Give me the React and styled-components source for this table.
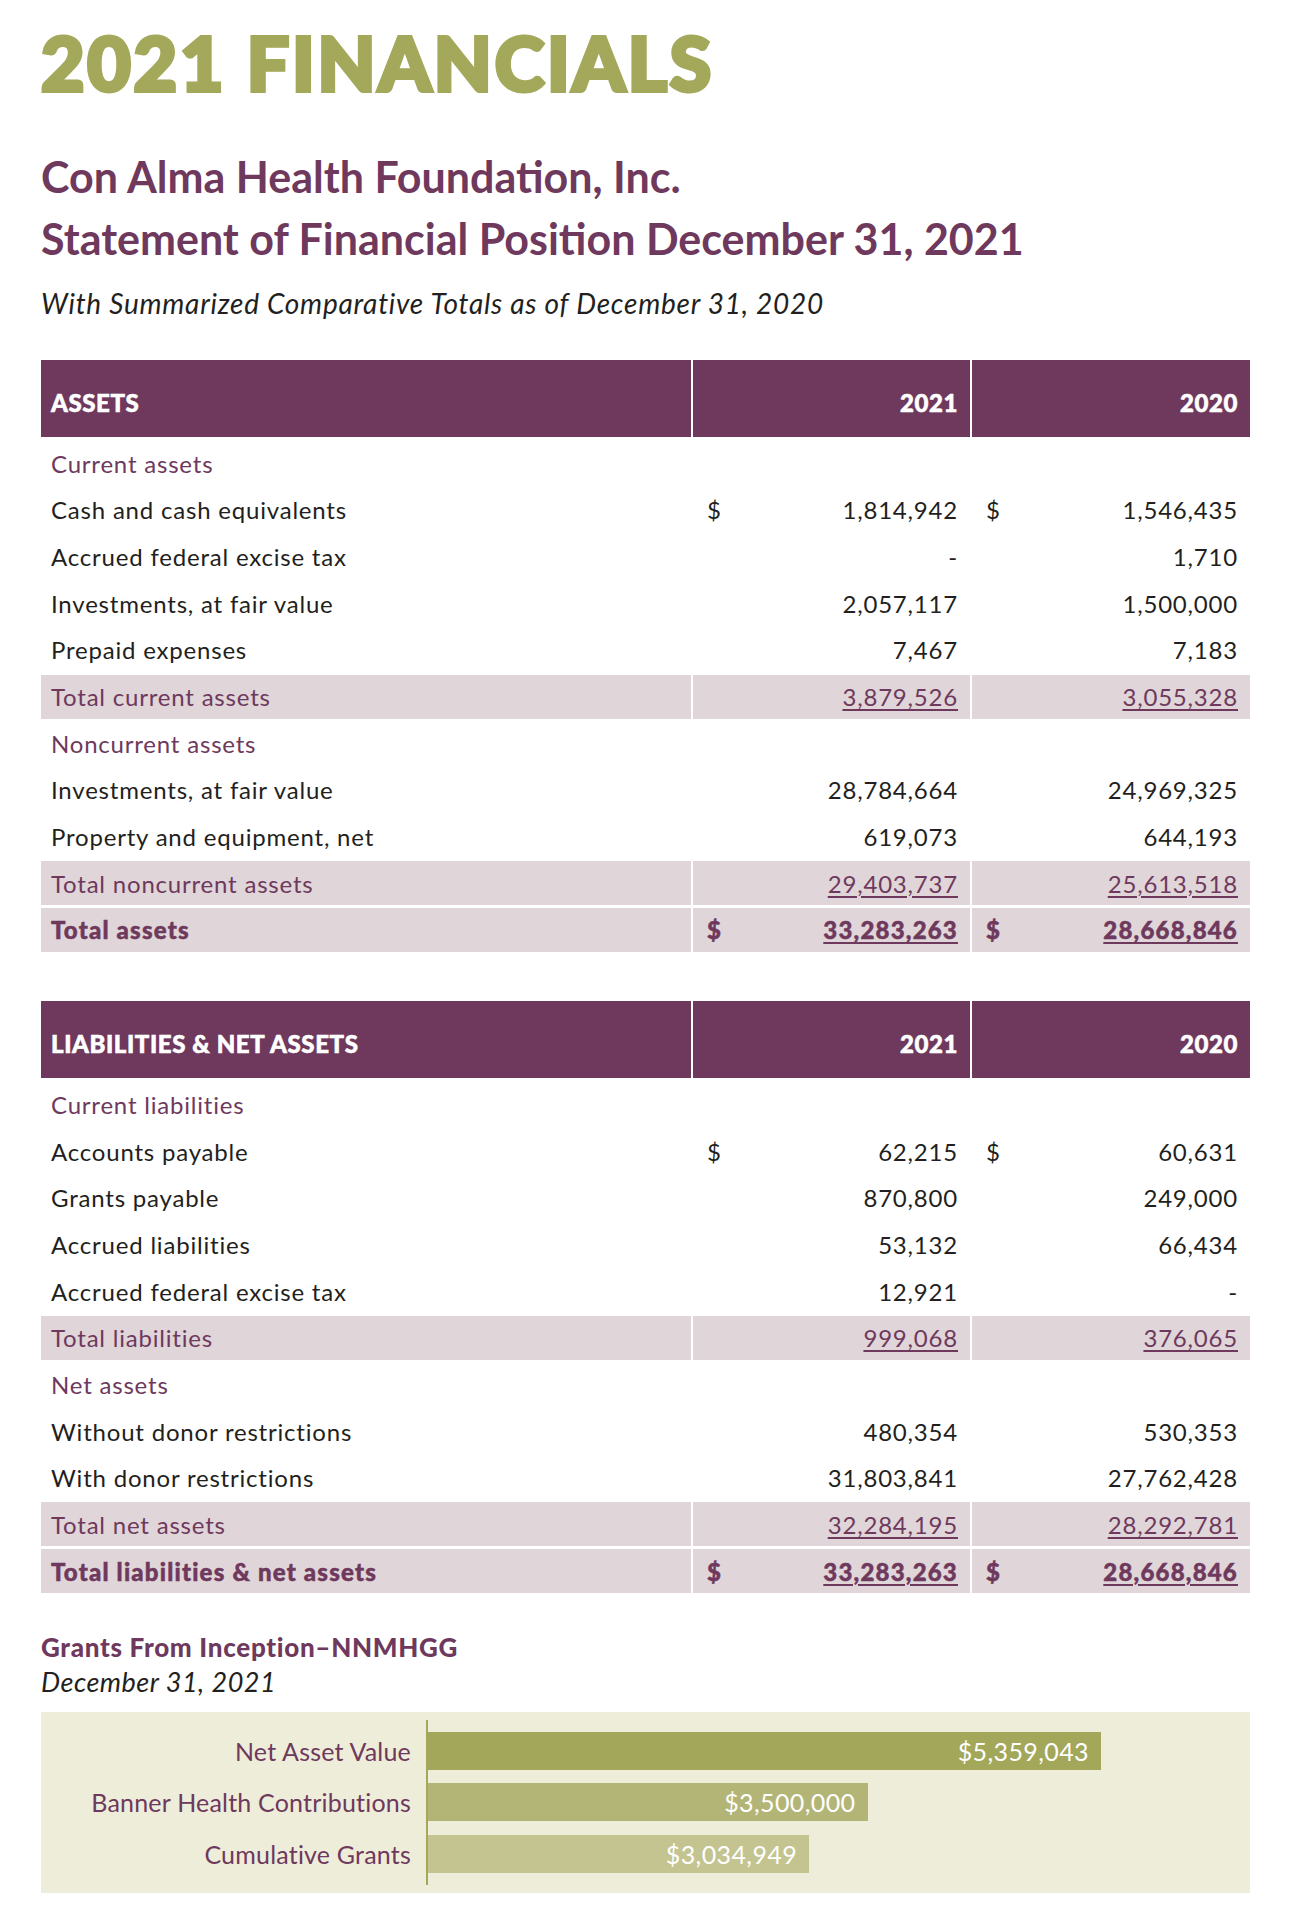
import React from "react";
import styled, { createGlobalStyle } from "styled-components";

const PURPLE = "#6E395D";
const OLIVE = "#A3A85A";
const INK = "#231F20";
const SHADE = "#E0D5D8";

const GlobalStyle = createGlobalStyle`
  html, body {
    margin: 0;
    padding: 0;
    background: #fff;
  }
  body {
    font-family: Lato, "Noto Sans", sans-serif;
    color: ${INK};
  }
`;

// Layout
const Page = styled.div`
  width: 1209px;
  padding: 25px 0 14px 41px;
`;

const Title = styled.h1`
  margin: 0;
  font-family: Lato, sans-serif;
  font-weight: 900;
  font-size: 75px;
  line-height: 1;
  color: ${OLIVE};
  letter-spacing: 2.8px;
  -webkit-text-stroke: 4px ${OLIVE};
`;

const Heading = styled.h2`
  margin: 46px 0 0;
  font-weight: 700;
  font-size: 43px;
  line-height: 62px;
  color: ${PURPLE};
`;

const Subtitle = styled.p`
  margin: 17px 0 0;
  font-style: italic;
  font-size: 28px;
  line-height: 1.2;
  letter-spacing: 0.75px;
`;

// Statement tables
const Table = styled.div`
  display: flex;
  flex-direction: column;
  gap: 2.66px;
  margin-top: ${(p) => p.$top}px;
`;

const Row = styled.div`
  display: grid;
  grid-template-columns: 650px 277px 278px;
  column-gap: 2px;
  height: ${(p) => (p.$header ? 77 : 44)}px;
  margin-bottom: ${(p) => (p.$header ? 2 : 0)}px;
`;

const HeadCell = styled.div`
  display: flex;
  align-items: center;
  justify-content: ${(p) => (p.$right ? "flex-end" : "flex-start")};
  padding: 8px 12px 0 10px;
  background: ${PURPLE};
  color: #fff;
  font-weight: 900;
  font-size: 24px;
  letter-spacing: 0.6px;
  -webkit-text-stroke: 0.6px #fff;
`;

const Cell = styled.div`
  display: flex;
  align-items: center;
  justify-content: ${(p) => (p.$num ? "space-between" : "flex-start")};
  padding: 0 12px 0 ${(p) => (p.$num ? 14 : 10)}px;
  background: ${(p) => (p.$shade ? SHADE : "transparent")};
  color: ${(p) => (p.$purple ? PURPLE : INK)};
  font-weight: ${(p) => (p.$bold ? 900 : 400)};
  font-size: 24px;
  letter-spacing: ${(p) => (p.$bold ? 1.2 : 0.8)}px;
  -webkit-text-stroke: ${(p) => (p.$bold ? `0.5px ${PURPLE}` : "0")};
`;

const Amount = styled.span`
  margin-left: auto;
  text-decoration: ${(p) => (p.$underline ? "underline" : "none")};
  text-decoration-thickness: 1.5px;
  text-underline-offset: 3px;
`;

// Chart
const ChartTitle = styled.h3`
  margin: 39px 0 0;
  font-weight: 900;
  font-size: 26px;
  line-height: 1.2;
  letter-spacing: 0.7px;
  color: ${PURPLE};
`;

const ChartDate = styled.p`
  margin: 3px 0 0;
  font-style: italic;
  font-size: 27px;
  line-height: 1.2;
  letter-spacing: 0.5px;
`;

const Chart = styled.div`
  display: flex;
  margin-top: 13px;
  padding: 8px 0;
  background: #EEEDDA;
`;

const Column = styled.div`
  display: flex;
  flex-direction: column;
  gap: 13.5px;
  padding: 12px 0;
`;

const Labels = styled(Column)`
  width: 370px;
  padding-right: 15px;
  align-items: flex-end;
`;

const Label = styled.div`
  height: 38px;
  display: flex;
  align-items: center;
  font-size: 25px;
  letter-spacing: 0.2px;
  color: ${PURPLE};
`;

const Bars = styled(Column)`
  border-left: 2px solid ${OLIVE};
`;

const Bar = styled.div`
  height: 38px;
  display: flex;
  align-items: center;
  justify-content: flex-end;
  padding-right: 12px;
  box-sizing: border-box;
  background: ${(p) => p.$color};
  color: #fff;
  font-size: 25px;
  letter-spacing: 0.4px;
`;

const assets = [
  { type: "section", label: "Current assets" },
  { label: "Cash and cash equivalents", a: "1,814,942", b: "1,546,435", dollar: true },
  { label: "Accrued federal excise tax", a: "-", b: "1,710" },
  { label: "Investments, at fair value", a: "2,057,117", b: "1,500,000" },
  { label: "Prepaid expenses", a: "7,467", b: "7,183" },
  { type: "total", label: "Total current assets", a: "3,879,526", b: "3,055,328" },
  { type: "section", label: "Noncurrent assets" },
  { label: "Investments, at fair value", a: "28,784,664", b: "24,969,325" },
  { label: "Property and equipment, net", a: "619,073", b: "644,193" },
  { type: "total", label: "Total noncurrent assets", a: "29,403,737", b: "25,613,518" },
  { type: "grand", label: "Total assets", a: "33,283,263", b: "28,668,846", dollar: true },
];

const liabilities = [
  { type: "section", label: "Current liabilities" },
  { label: "Accounts payable", a: "62,215", b: "60,631", dollar: true },
  { label: "Grants payable", a: "870,800", b: "249,000" },
  { label: "Accrued liabilities", a: "53,132", b: "66,434" },
  { label: "Accrued federal excise tax", a: "12,921", b: "-" },
  { type: "total", label: "Total liabilities", a: "999,068", b: "376,065" },
  { type: "section", label: "Net assets" },
  { label: "Without donor restrictions", a: "480,354", b: "530,353" },
  { label: "With donor restrictions", a: "31,803,841", b: "27,762,428" },
  { type: "total", label: "Total net assets", a: "32,284,195", b: "28,292,781" },
  { type: "grand", label: "Total liabilities & net assets", a: "33,283,263", b: "28,668,846", dollar: true },
];

const grants = [
  { label: "Net Asset Value", value: 5359043, color: "#A3A75A" },
  { label: "Banner Health Contributions", value: 3500000, color: "#B3B577" },
  { label: "Cumulative Grants", value: 3034949, color: "#C3C48F" },
];

const money = (n) => "$" + n.toLocaleString("en-US");

const Statement = ({ title, rows, top }) => (
  <Table $top={top}>
    <Row $header>
      <HeadCell>{title}</HeadCell>
      <HeadCell $right>2021</HeadCell>
      <HeadCell $right>2020</HeadCell>
    </Row>
    {rows.map((r, i) => {
      const total = r.type === "total" || r.type === "grand";
      const grand = r.type === "grand";
      const purple = total || r.type === "section";
      return (
        <Row key={i}>
          <Cell $shade={total} $purple={purple} $bold={grand}>
            {r.label}
          </Cell>
          {["a", "b"].map((k) => (
            <Cell key={k} $num $shade={total} $purple={purple} $bold={grand}>
              {r.dollar && <span>$</span>}
              {r[k] && <Amount $underline={total}>{r[k]}</Amount>}
            </Cell>
          ))}
        </Row>
      );
    })}
  </Table>
);

const App = () => {
  const max = grants[0].value;
  return (
    <Page>
      <GlobalStyle />
      <Title>2021 FINANCIALS</Title>
      <Heading>
        Con Alma Health Foundation, Inc.
        <br />
        Statement of Financial Position December 31, 2021
      </Heading>
      <Subtitle>With Summarized Comparative Totals as of December 31, 2020</Subtitle>

      <Statement title="ASSETS" rows={assets} top={39} />
      <Statement title="LIABILITIES & NET ASSETS" rows={liabilities} top={49} />

      <ChartTitle>Grants From Inception–NNMHGG</ChartTitle>
      <ChartDate>December 31, 2021</ChartDate>
      <Chart>
        <Labels>
          {grants.map((g) => (
            <Label key={g.label}>{g.label}</Label>
          ))}
        </Labels>
        <Bars>
          {grants.map((g) => (
            <Bar key={g.label} $color={g.color} style={{ width: (g.value / max) * 673 }}>
              {money(g.value)}
            </Bar>
          ))}
        </Bars>
      </Chart>
    </Page>
  );
};

export default App;
